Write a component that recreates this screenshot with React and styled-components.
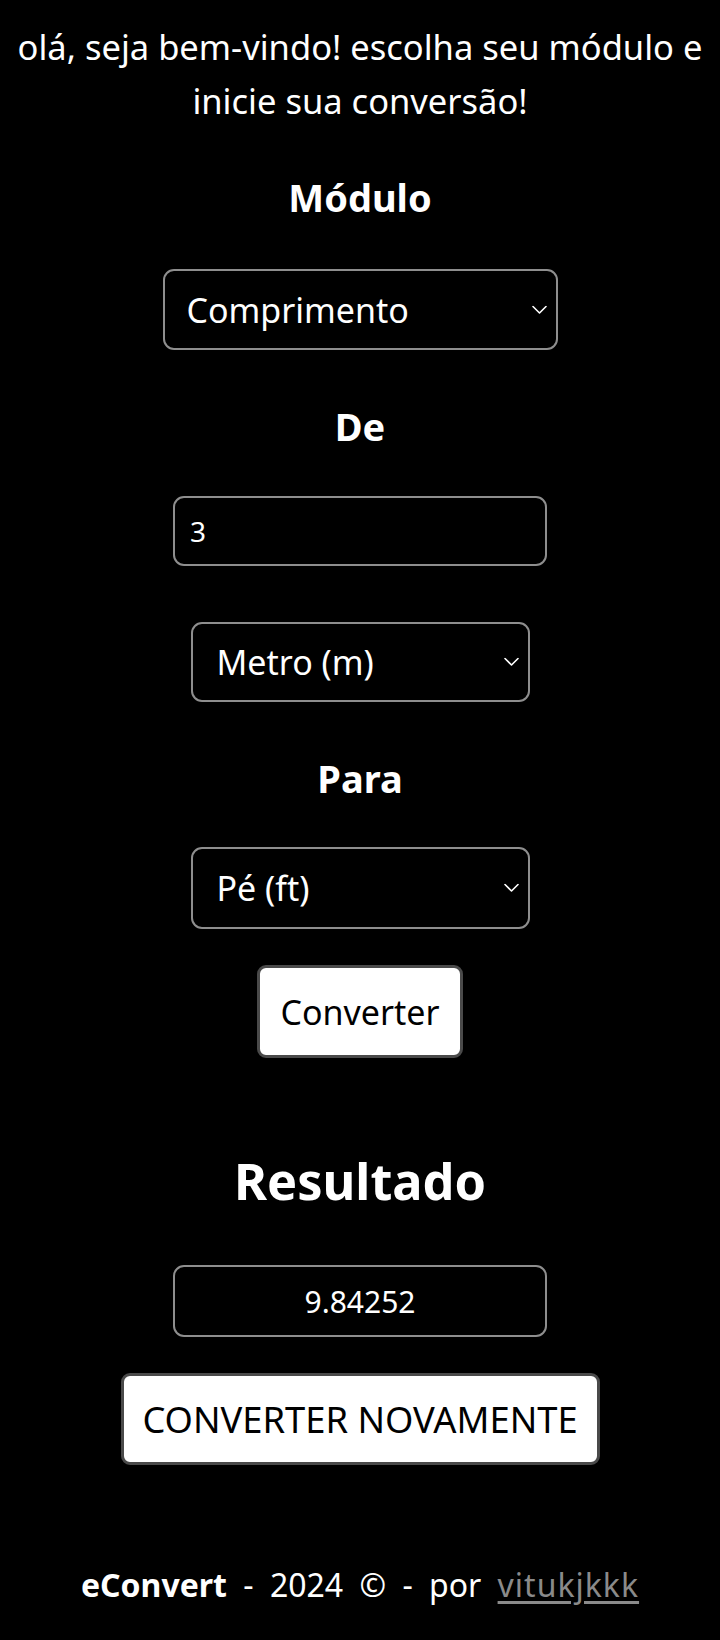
import React from 'react';
import styled, { createGlobalStyle } from 'styled-components';

const GlobalStyle = createGlobalStyle`
  html, body {
    margin: 0;
    background: #000;
  }
  body {
    color: #fff;
    font-family: "Noto Sans", "Liberation Sans", sans-serif;
  }
`;

const Page = styled.main`
  display: flex;
  flex-direction: column;
  align-items: center;
  box-sizing: border-box;
  min-height: 1640px;
  padding: 20px 8px 0;
`;

const Intro = styled.p`
  margin: 0;
  font-size: 34.5px;
  line-height: 54px;
  text-align: center;
`;

const Label = styled.h2`
  margin: ${p => p.$top}px 0 0;
  font-size: 38px;
  line-height: 48px;
  font-weight: 700;
`;

const ResultTitle = styled.h1`
  margin: ${p => p.$top}px 0 0;
  font-size: 50.5px;
  line-height: 60px;
  font-weight: 700;
`;

const SelectWrap = styled.div`
  position: relative;
  width: ${p => p.$w}px;
  height: ${p => p.$h}px;
  margin-top: ${p => p.$top}px;
`;

const Select = styled.select`
  appearance: none;
  width: 100%;
  height: 100%;
  box-sizing: border-box;
  padding: 0 44px 0 ${p => p.$pad}px;
  background: #000;
  color: #fff;
  border: 2px solid #8e8e8e;
  border-radius: 11px;
  font-family: inherit;
  font-size: 34px;
  outline: none;
`;

const Chevron = styled.svg`
  position: absolute;
  right: 11px;
  top: 50%;
  transform: translateY(-50%);
  pointer-events: none;
`;

const Field = styled.input`
  width: 374px;
  height: 70px;
  box-sizing: border-box;
  margin-top: ${p => p.$top}px;
  padding: 0 15px;
  background: #000;
  color: #fff;
  border: 2px solid #8e8e8e;
  border-radius: 11px;
  font-family: inherit;
  font-size: 28px;
  outline: none;
`;

const Output = styled.div`
  display: flex;
  align-items: center;
  justify-content: center;
  width: 374px;
  height: 72px;
  box-sizing: border-box;
  margin-top: ${p => p.$top}px;
  border: 2px solid #8e8e8e;
  border-radius: 11px;
  font-size: 30px;
`;

const Button = styled.button`
  width: ${p => p.$w}px;
  height: ${p => p.$h}px;
  margin-top: ${p => p.$top}px;
  padding: 0;
  background: #fff;
  color: #000;
  border: 3px solid #4a4a4a;
  border-radius: 9px;
  font-family: inherit;
  font-size: ${p => p.$size}px;
  cursor: pointer;
`;

const Footer = styled.footer`
  margin-top: ${p => p.$top}px;
  font-size: 32px;
  line-height: 40px;
  word-spacing: 8px;
`;

const Brand = styled.b`
  font-weight: 700;
`;

const Author = styled.a`
  color: #8a8a8a;
  text-decoration: underline;
  text-underline-offset: 4px;
  letter-spacing: 1px;
`;

const Dropdown = ({ w, h, top, pad, value, options }) => (
  <SelectWrap $w={w} $h={h} $top={top}>
    <Select $pad={pad} defaultValue={value}>
      {options.map(o => <option key={o}>{o}</option>)}
    </Select>
    <Chevron width="15" height="9" viewBox="0 0 15 9" fill="none">
      <path d="M1 1l6.5 6.5L14 1" stroke="#fff" strokeWidth="1.6" strokeLinecap="round" strokeLinejoin="round" />
    </Chevron>
  </SelectWrap>
);

const units = ['Metro (m)', 'Centímetro (cm)', 'Quilômetro (km)', 'Pé (ft)', 'Polegada (in)'];

export default function App() {
  return (
    <>
      <GlobalStyle />
      <Page>
        <Intro>olá, seja bem-vindo! escolha seu módulo e inicie sua conversão!</Intro>

        <Label $top={45}>Módulo</Label>
        <Dropdown w={395} h={81} top={48} pad={22} value="Comprimento"
          options={['Comprimento', 'Massa', 'Temperatura']} />

        <Label $top={52}>De</Label>
        <Field $top={46} defaultValue="3" />
        <Dropdown w={339} h={80} top={56} pad={24} value="Metro (m)" options={units} />

        <Label $top={52}>Para</Label>
        <Dropdown w={339} h={82} top={45} pad={24} value="Pé (ft)" options={units} />

        <Button $w={206} $h={93} $top={36} $size={34}>Converter</Button>

        <ResultTitle $top={93}>Resultado</ResultTitle>
        <Output $top={54}>9.84252</Output>
        <Button $w={479} $h={92} $top={36} $size={36.3}>CONVERTER NOVAMENTE</Button>

        <Footer $top={100}>
          <Brand>eConvert</Brand> - 2024 © - por <Author href="#">vitukjkkk</Author>
        </Footer>
      </Page>
    </>
  );
}
